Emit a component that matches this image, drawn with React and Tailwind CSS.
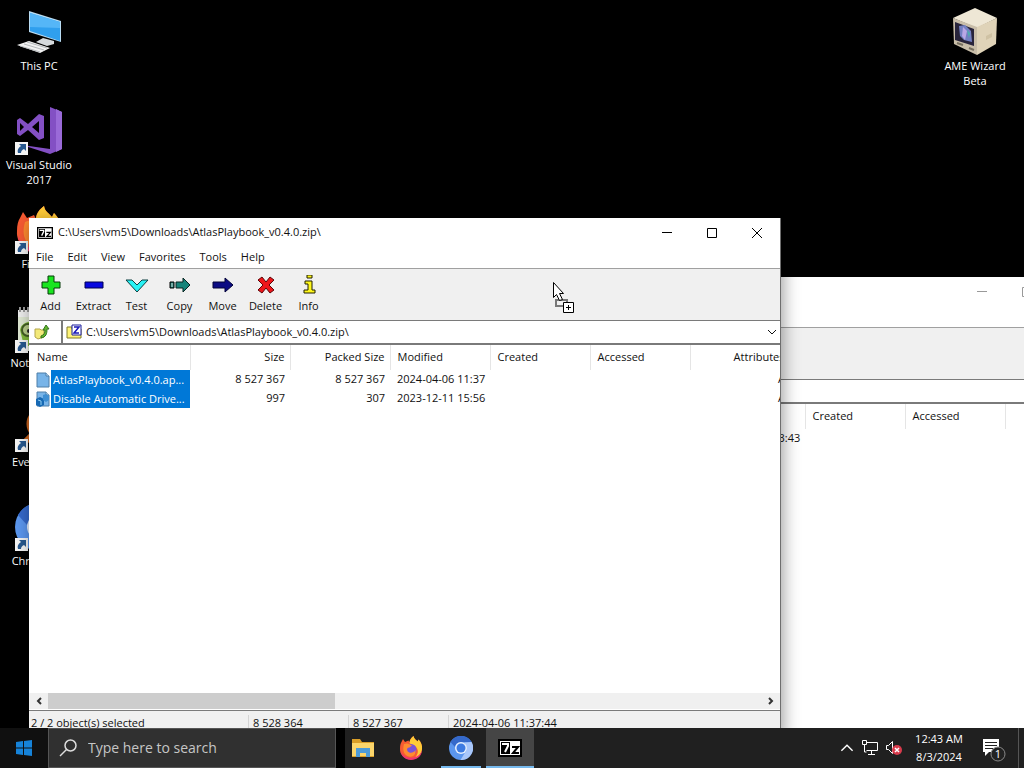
import { useState } from 'react';

const initialFiles = [
    {
        name: 'AtlasPlaybook_v0.4.0.ap...',
        type: 'file',
        size: '8 527 367',
        packed: '8 527 367',
        modified: '2024-04-06 11:37',
    },
    {
        name: 'Disable Automatic Drive...',
        type: 'registry',
        size: '997',
        packed: '307',
        modified: '2023-12-11 15:56',
    },
];

const downloads = [
    {
        name: 'AtlasPlaybook_v0.4.0.zip',
        type: 'file',
        size: '',
        packed: '',
        modified: '2024-08-02 23:43',
    },
];

const menus = ['File', 'Edit', 'View', 'Favorites', 'Tools', 'Help'];

function ShortcutBadge() {
    return (
        <svg className="absolute bottom-0 left-0 h-[13px] w-[13px]" viewBox="0 0 13 13">
            <path d="M0 0h13v13H0z" fill="#f4f4f4" />
            <path d="M4 2h7v7L9 7c-2 1-3 2-3 4H3C2 8 3 6 6 4z" fill="#27588f" />
        </svg>
    );
}

function ThisPcIcon() {
    return (
        <svg className="h-12 w-12" viewBox="0 0 48 48">
            <path d="M14 3l32 10v21L14 24z" fill="#b9dcf3" />
            <path d="M15 5l30 9v19L15 23z" fill="#2f9fee" />
            <path d="M15 5l30 9v6L15 19z" fill="#55b6f7" />
            <path d="M28 30l11 3v3l-7 2-11-4z" fill="#d6dadd" />
            <path d="M2 37l12-4 21 7-10 5z" fill="#f1f1f1" />
            <path d="M5 38l20 6M9 36l20 6M12 34l20 6" stroke="#b4b8bb" />
        </svg>
    );
}

function VisualStudioIcon() {
    return (
        <svg className="h-12 w-12" viewBox="0 0 48 48">
            <path d="M35 0l12 5v37l-12 5-28-9 28 4z" fill="#8350c4" />
            <path d="M41 2l6 3v37l-6 3z" fill="#9a6ad8" />
            <path
                d="M2 13l3-2 8 6L24 7l5 2v22l-5 2-11-10-8 6-3-2zM5 16v8l4-4zm12 4l7 6V14z"
                fill="#8350c4"
                fillRule="evenodd"
            />
        </svg>
    );
}

function FirefoxIcon({ className = 'h-12 w-12' }) {
    return (
        <svg className={className} viewBox="0 0 48 48">
            <path
                d="M5 12l3-6 4 6 7-3 2 4c0-6 4-10 8-13 1 6 5 7 8 11l2-4c5 5 8 12 7 19-1 13-10 21-22 21S1 38 2 25c0-6 1-10 3-13z"
                fill="#f65a32"
            />
            <path
                d="M21 14c0-6 3-10 8-14 1 6 5 7 8 11l2-4c5 5 8 12 7 19-1 9-7 16-15 19 5-6 9-13 5-20-3-6-10-7-15-11z"
                fill="#ffcb38"
            />
            <path d="M3 29c3 11 15 16 26 14 8-1 14-6 17-14-1 12-11 19-22 19S4 40 3 29z" fill="#ed3571" />
            <circle cx="24" cy="27" r="11" fill="#7952d8" />
            <path d="M10 16c6-3 11 0 16 3l-5 4c-5 0-6 4-4 7 3 5 12 5 16-2 1 10-6 15-13 13-9-2-14-11-10-25z" fill="#ff8b30" />
        </svg>
    );
}

function NotepadIcon() {
    return (
        <svg className="h-12 w-12" viewBox="0 0 48 48">
            <path d="M3 5h40v41H3z" fill="#dfe8d3" />
            <path d="M3 5h40v7H3z" fill="#eee" />
            <path d="M5 2v5M9 2v5M13 2v5M17 2v5M21 2v5M25 2v5" stroke="#999" strokeWidth="2" />
            <path d="M5 25c1-7 9-11 19-7l8 10-7 13H9z" fill="#80b93c" />
            <circle cx="13" cy="25" r="6" fill="#b9cf8c" stroke="#425d24" strokeWidth="2" />
            <circle cx="14" cy="26" r="2" fill="#222" />
        </svg>
    );
}

function EverythingIcon() {
    return (
        <svg className="h-12 w-12" viewBox="0 0 48 48" fill="none">
            <circle cx="28" cy="20" r="14" stroke="#c8621e" strokeWidth="5" />
            <path d="M18 30L5 43" stroke="#c8621e" strokeWidth="6" />
        </svg>
    );
}

function ChromiumIcon({ className = 'h-12 w-12' }) {
    return (
        <svg className={className} viewBox="0 0 48 48">
            <circle cx="24" cy="24" r="24" fill="#5b96ee" />
            <path d="M3 12A24 24 0 0 1 45 12H24c-6 0-10 3-12 10z" fill="#3569ca" />
            <path d="M45 12a24 24 0 0 1-22 36l11-18c3-5 1-13-4-17z" fill="#a9c7fa" />
            <circle cx="24" cy="24" r="12" fill="#e6effd" />
            <circle cx="24" cy="24" r="9" fill="#3d7be2" />
        </svg>
    );
}

function AmeWizardIcon() {
    return (
        <svg className="h-12 w-12" viewBox="0 0 48 48">
            <path d="M24 0l22 10-20 10L2 10z" fill="#eee7d5" />
            <path d="M2 10l24 9v28L3 36z" fill="#c9bea9" />
            <path d="M26 19l20-9-1 26-19 11z" fill="#dfd3b8" />
            <path d="M4 14l19 7v17L4 32z" fill="#28243b" />
            <path d="M8 18l6-1 6 6 1 11-8-2-4-4z" fill="#7380c2" />
            <path d="M12 19l4 4-2 9-3-4z" fill="#b9a7e6" />
            <path d="M16 22l3 3-1 5z" fill="#4ab0ae" />
            <path d="M6 35l6 2M18 40l5 2" stroke="#777060" strokeWidth="2" />
            <path d="M35 28l6-3v4l-6 3z" fill="#cfc2a4" />
        </svg>
    );
}

function SevenZipIcon({ className = 'h-3 w-4' }) {
    return (
        <svg className={className} viewBox="0 0 24 18" fill="none">
            <path d="M1 1h22v16H1z" fill="#fff" stroke="#000" strokeWidth="2" />
            <path d="M3 3h9v12H3z" fill="#000" />
            <path d="M4 5h6v2l-3 6" stroke="#fff" strokeWidth="2" />
            <path d="M14 8h6l-5 6h6" stroke="#000" strokeWidth="2" />
        </svg>
    );
}

function DesktopIcon({ icon, label, shortcut = true }) {
    return (
        <a
            href="#"
            className="flex h-[99px] w-[76px] flex-col items-center gap-0.5 pt-2 text-center text-[11px] leading-[15px] text-white"
        >
            <span className="relative">
                {icon}
                {shortcut && <ShortcutBadge />}
            </span>
            <span>{label}</span>
        </a>
    );
}

const tools = [
    {
        label: 'Add',
        icon: <path d="M9 1h6v6h6v6h-6v6H9v-6H3V7h6z" fill="#19e51f" stroke="#063b08" />,
    },
    {
        label: 'Extract',
        icon: <path d="M3 7h18v6H3z" fill="#0808e0" stroke="#000050" />,
    },
    {
        label: 'Test',
        icon: <path d="M1 5h6l5 5 5-5h6L12 17z" fill="#28f2f5" stroke="#0d3f41" />,
    },
    {
        label: 'Copy',
        icon: (
            <>
                <path d="M2 7h4v6H2z" fill="#16766d" stroke="#000" />
                <path d="M4 8v4" stroke="#d9e7e6" />
                <path d="M8 7h7V3l7 7-7 7v-4H8z" fill="#16847a" stroke="#062421" />
            </>
        ),
    },
    {
        label: 'Move',
        icon: <path d="M2 7h12V3l8 7-8 7v-4H2z" fill="#0c0c83" stroke="#020238" />,
    },
    {
        label: 'Delete',
        icon: <path d="M4 5l4-3 4 5 4-5 4 3-5 5 5 5-4 3-4-5-4 5-4-3 5-5z" fill="#ee161b" stroke="#5c0507" />,
    },
    {
        label: 'Info',
        icon: (
            <path
                d="M10 0h5v3h-5zM8 6h7v9h3v3H7v-3h4V9H8z"
                fill="#fff81b"
                stroke="#222000"
            />
        ),
    },
];

function FileIcon({ type }) {
    return (
        <svg className="h-4 w-4 shrink-0" viewBox="0 0 16 16">
            <path d="M2 1h9l3 3v11H2z" fill="#78b4e8" stroke="#4e7ea8" />
            <path d="M11 1v3h3" fill="#cce5f8" stroke="#4e7ea8" />
            {type === 'registry' && (
                <>
                    <path d="M1 8l4-2 4 2v6l-4 2-4-2z" fill="#1769b4" />
                    <path d="M8 4l3-1 3 2v4l-3 2-3-2z" fill="#3e8fd3" />
                    <path d="M3 9l3 1v4" stroke="#8fd0f3" fill="none" />
                </>
            )}
        </svg>
    );
}

function Chevron({ className, d }) {
    return (
        <svg className={className} viewBox="0 0 10 10" fill="none" stroke="currentColor">
            <path d={d} />
        </svg>
    );
}

function FileTable({ files, selected, onSelect }) {
    const head = 'h-[25px] border-r border-[#e5e5e5] px-[5px] font-normal';

    return (
        <table className="w-[761px] table-fixed border-collapse whitespace-nowrap">
            <thead>
                <tr>
                    <th className={`${head} w-[161px] pl-2 text-left`}>Name</th>
                    <th className={`${head} w-[100px] text-right`}>Size</th>
                    <th className={`${head} w-[100px] text-right`}>Packed Size</th>
                    <th className={`${head} w-[100px] pl-[7px] text-left`}>Modified</th>
                    <th className={`${head} w-[100px] pl-[7px] text-left`}>Created</th>
                    <th className={`${head} w-[100px] pl-[7px] text-left`}>Accessed</th>
                    <th className={`${head} w-[100px] text-right`}>Attributes</th>
                </tr>
            </thead>
            <tbody>
                {files.map((file) => (
                    <tr key={file.name} className="h-[19px]" onClick={() => onSelect(file.name)}>
                        <td>
                            <div className="flex items-center pl-1.5">
                                <FileIcon type={file.type} />
                                <span
                                    className={`h-[19px] min-w-0 flex-1 overflow-hidden pl-0.5 leading-[19px] ${
                                        selected.includes(file.name) ? 'bg-[#0078d7] text-white' : ''
                                    }`}
                                >
                                    {file.name}
                                </span>
                            </div>
                        </td>
                        <td className="px-[5px] text-right">{file.size}</td>
                        <td className="px-[5px] text-right">{file.packed}</td>
                        <td className="pl-[7px]">{file.modified}</td>
                        <td />
                        <td />
                        <td className="px-[5px] text-right">A</td>
                    </tr>
                ))}
            </tbody>
        </table>
    );
}

function SevenZipWindow({ path, files, status, active = false, className }) {
    const [selected, setSelected] = useState(active ? files.map((file) => file.name) : []);

    return (
        <section
            className={`absolute flex h-[517px] w-[752px] flex-col border-r border-[#6e6e6e] bg-white text-[11px] text-[#111] ${className}`}
        >
            <header className="flex h-[29px] shrink-0 items-center pl-2">
                <SevenZipIcon />
                <h1 className="ml-[5px] flex-1">{path}</h1>
                <div className={`flex h-full ${active ? 'text-black' : 'text-[#999]'}`}>
                    <button aria-label="Minimize" className="grid w-[45px] place-items-center">
                        <Chevron className="h-2.5 w-2.5" d="M0 4.500h10" />
                    </button>
                    <button aria-label="Maximize" className="grid w-[45px] place-items-center">
                        <Chevron className="h-2.5 w-2.5" d="M.5.500h9v9h-9z" />
                    </button>
                    <button aria-label="Close" className="grid w-[46px] place-items-center">
                        <Chevron className="h-2.5 w-2.5" d="M0 0l10 10M10 0L0 10" />
                    </button>
                </div>
            </header>
            <nav className="flex h-[21px] shrink-0 items-center gap-3.5 pl-[7px]">
                {menus.map((menu) => (
                    <button key={menu}>{menu}</button>
                ))}
            </nav>
            <div className="flex h-[52px] shrink-0 border-t border-[#a0a0a0] bg-[#f0f0f0]">
                {tools.map((tool) => (
                    <button key={tool.label} className="flex w-[43px] flex-col items-center pt-1.5">
                        <svg className="h-5 w-6" viewBox="0 0 24 20">
                            {tool.icon}
                        </svg>
                        <span className="mt-0.5 leading-[18px]">{tool.label}</span>
                    </button>
                ))}
            </div>
            <div className="flex h-[25px] shrink-0 border-y border-b-2 border-[#7a7a7a]">
                <button aria-label="Up one level" className="grid w-8 place-items-center pr-1.5">
                    <svg className="h-4 w-4" viewBox="0 0 16 16">
                        <path d="M1 5h5l1 1h3v7l-6 2-3-2z" fill="#f3e979" stroke="#b3a64a" />
                        <path d="M7 12c3-1 4-3 4-6H9l3-5 3 4h-2c0 5-1 8-6 9z" fill="#63b62f" stroke="#33751c" />
                    </svg>
                </button>
                <label className="flex flex-1 items-center border-l-2 border-[#7a7a7a] pl-[3px]">
                    <svg className="h-4 w-4" viewBox="0 0 16 16" fill="none">
                        <path d="M1 3h5v2h9v9H1z" fill="#fff477" stroke="#817c2b" />
                        <path d="M6 1h9v10H6z" fill="#fff" stroke="#1b1d9b" />
                        <path d="M8 3h5L8 9h5" stroke="#1818b8" strokeWidth="1.500" />
                    </svg>
                    <input
                        aria-label="Path"
                        className="ml-1 min-w-0 flex-1 bg-transparent outline-none"
                        defaultValue={path}
                    />
                </label>
                <button aria-label="Show paths" className="px-[3px]">
                    <Chevron className="h-2.5 w-2.5" d="M1 3l4 4 4-4" />
                </button>
            </div>
            <div className="min-h-0 flex-1 overflow-hidden">
                <FileTable files={files} selected={selected} onSelect={(name) => setSelected([name])} />
            </div>
            <div className="flex h-4 shrink-0 bg-[#f0f0f0] text-[#333]">
                <button aria-label="Scroll left" className="grid w-[19px] place-items-center">
                    <Chevron className="h-2.5 w-2.5 stroke-2" d="M7 2L4 5l3 3" />
                </button>
                <div className="flex-1">
                    <div className="h-full w-[287px] bg-[#cdcdcd]" />
                </div>
                <button aria-label="Scroll right" className="grid w-[18px] place-items-center">
                    <Chevron className="h-2.5 w-2.5 stroke-2" d="M3 2l3 3-3 3" />
                </button>
            </div>
            <footer className="mt-px flex h-[25px] shrink-0 items-center border-t border-[#7a7a7a] bg-[#f0f0f0]">
                <span className="w-[219px] pl-0.5">{status[0]}</span>
                <span className="w-[100px] border-l border-[#d4d4d4] pl-1">{status[1]}</span>
                <span className="w-[100px] border-l border-[#d4d4d4] pl-1">{status[2]}</span>
                <span className="border-l border-[#d4d4d4] pl-1">{status[3]}</span>
            </footer>
        </section>
    );
}

function DragCursor() {
    return (
        <svg className="absolute top-[282px] left-[553px] h-8 w-6" viewBox="0 0 24 32" fill="none">
            <path d="M2.500 17.500h12v7h-12z" stroke="#000" strokeDasharray="1 1" />
            <path d="M3.500 18.500h10v5h-10z" stroke="#000" strokeDasharray="1 1" />
            <path d="M.5.500v15l3-3 3 6 3-1-3-6h4z" fill="#fff" stroke="#000" />
            <path d="M10.500 20.500h10v10h-10z" fill="#fff" stroke="#000" />
            <path d="M13 25.500h5M15.500 23v5" stroke="#000" />
        </svg>
    );
}

function Taskbar() {
    return (
        <footer className="flex h-10 shrink-0 bg-[#202020] text-white">
            <button aria-label="Start" className="grid w-12 place-items-center bg-[#101010]">
                <svg className="h-4 w-4" viewBox="0 0 16 16" fill="#1683d9">
                    <path d="M0 2l7-1v6.500H0zM8 1l8-1v7.500H8zM0 8.500h7V15l-7-1zM8 8.500h8V16l-8-1z" />
                </svg>
            </button>
            <label className="flex w-72 items-center border border-[#555] bg-[#303030] pl-2.5">
                <svg className="h-[18px] w-[18px]" viewBox="0 0 18 18" fill="none" stroke="#ddd" strokeWidth="1.500">
                    <circle cx="11.500" cy="6.500" r="5.500" />
                    <path d="M7.500 10.500L1 17" />
                </svg>
                <input
                    aria-label="Search"
                    className="ml-[11px] min-w-0 flex-1 bg-transparent text-sm outline-none placeholder:text-[#c6c6c6]"
                    placeholder="Type here to search"
                />
            </label>
            <div className="flex gap-px border-l-[9px] border-black">
                <button aria-label="File Explorer" className="grid w-9 place-items-center">
                    <svg className="h-[22px] w-6" viewBox="0 0 24 22">
                        <path d="M1 2h8l2 3h12v15H1z" fill="#d99e28" />
                        <path d="M1 6h22v13H1z" fill="#fbd56b" />
                        <path d="M5 11h14v9h-4v-4H9v4H5z" fill="#4d9bd8" />
                    </svg>
                </button>
                <button aria-label="Firefox" className="grid w-[58px] place-items-center">
                    <FirefoxIcon className="h-6 w-6" />
                </button>
                <button aria-label="Chromium" className="grid w-10 place-items-center border-b-2 border-[#76b9ed] pt-0.5">
                    <ChromiumIcon className="h-6 w-6" />
                </button>
                <button
                    aria-label="7-Zip"
                    className="ml-1 grid w-12 place-items-center border-b-2 border-[#76b9ed] bg-[#454545] pt-0.5"
                >
                    <SevenZipIcon className="h-[18px] w-6" />
                </button>
            </div>
            <div className="ml-auto flex items-center">
                <button aria-label="Show hidden icons" className="mr-2">
                    <Chevron className="h-3.5 w-3.5" d="M1 7l4-4 4 4" />
                </button>
                <button aria-label="Network" className="mr-2">
                    <svg className="h-4 w-4" viewBox="0 0 16 16" fill="none" stroke="#fff">
                        <path d="M4.500 2.500h11v8h-11M9.500 11v3M6 14.500h7M.5.500h4v4h-4zM2.500 4v8h2" />
                    </svg>
                </button>
                <button aria-label="Volume">
                    <svg className="h-4 w-4" viewBox="0 0 16 16" fill="none">
                        <path d="M.5 5.500h2l4-4v12l-4-4h-2z" stroke="#fff" />
                        <circle cx="11" cy="10" r="5" fill="#d83b4c" />
                        <path d="M9 8l4 4M13 8l-4 4" stroke="#fff" strokeWidth="1.500" />
                    </svg>
                </button>
                <div className="w-[74px] text-center text-[11px] leading-[18px]">
                    <p>12:43 AM</p>
                    <p>8/3/2024</p>
                </div>
                <button aria-label="1 new notification" className="mr-2.5 ml-1">
                    <svg className="h-7 w-7" viewBox="0 0 28 28">
                        <path d="M3 5h16v13H9l-4 4v-4H3z" fill="#fff" />
                        <path d="M5 8.500h12M5 11.500h12M5 14.500h8" stroke="#222" />
                        <circle cx="18" cy="20" r="7" fill="#222" stroke="#888" />
                        <text x="18" y="24" fill="#fff" fontSize="11" textAnchor="middle">
                            1
                        </text>
                    </svg>
                </button>
                <span className="h-10 w-1.5 border-l border-[#555]" />
            </div>
        </footer>
    );
}

export default function App() {
    return (
        <div className="flex h-screen flex-col overflow-hidden bg-black font-['Open_Sans','Noto_Sans',sans-serif]">
            <main className="relative flex min-h-0 flex-1 justify-between overflow-hidden">
                <div className="flex flex-col pl-px">
                    <DesktopIcon icon={<ThisPcIcon />} label="This PC" shortcut={false} />
                    <DesktopIcon icon={<VisualStudioIcon />} label="Visual Studio 2017" />
                    <DesktopIcon icon={<FirefoxIcon />} label="Firefox" />
                    <DesktopIcon icon={<NotepadIcon />} label="Notepad++" />
                    <DesktopIcon icon={<EverythingIcon />} label="Everything" />
                    <DesktopIcon icon={<ChromiumIcon />} label="Chromium" />
                </div>
                <div className="pr-[11px]">
                    <DesktopIcon icon={<AmeWizardIcon />} label="AME Wizard Beta" shortcut={false} />
                </div>
                <SevenZipWindow
                    className="top-[277px] left-[344px]"
                    path="C:\Users\vm5\Downloads\"
                    files={downloads}
                    status={['0 / 1 object(s) selected', '', '', '']}
                />
                <SevenZipWindow
                    active
                    className="top-[218px] left-[29px] shadow-[2px_4px_16px_rgba(0,0,0,0.4)]"
                    path="C:\Users\vm5\Downloads\AtlasPlaybook_v0.4.0.zip\"
                    files={initialFiles}
                    status={['2 / 2 object(s) selected', '8 528 364', '8 527 367', '2024-04-06 11:37:44']}
                />
                <DragCursor />
            </main>
            <Taskbar />
        </div>
    );
}
